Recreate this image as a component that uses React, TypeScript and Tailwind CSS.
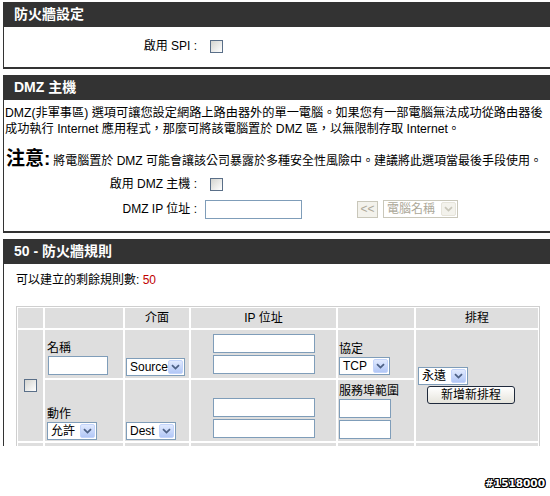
import clsx from "clsx";
import type { ReactNode } from "react";

function Chevron({ disabled }: { disabled?: boolean }) {
  return (
    <svg width="9" height="6" viewBox="0 0 9 6">
      <path
        d="M1 1.2 L4.5 4.6 L8 1.2"
        fill="none"
        stroke={disabled ? "#c9c7ba" : "#4d6185"}
        strokeWidth="1.8"
      />
    </svg>
  );
}

function Combo({ label, w, disabled }: { label: string; w: string; disabled?: boolean }) {
  return (
    <span
      className={clsx(
        "inline-flex h-[18px] items-center justify-between border bg-white pl-[3px] pr-px leading-none",
        w,
        disabled ? "border-[#c9c7ba] text-[#aca899]" : "border-[#7f9db9] text-black"
      )}
    >
      <span>{label}</span>
      <span
        className={clsx(
          "flex h-[14px] w-[15px] items-center justify-center rounded-[2px] border",
          disabled
            ? "border-[#e6e4da] bg-[#f3f2ec]"
            : "border-[#c3d4fb] bg-linear-to-b from-[#e1eafe] to-[#b2c7f6]"
        )}
      >
        <Chevron disabled={disabled} />
      </span>
    </span>
  );
}

function Field({ w }: { w: string }) {
  return <span className={clsx("block h-[19px] border border-[#7f9db9] bg-white", w)} />;
}

function Check() {
  return (
    <span className="block h-[13px] w-[13px] border border-[#5a6f88] bg-linear-to-br from-[#d4d4cf] to-white" />
  );
}

function Section({ title, children }: { title: string; children: ReactNode }) {
  return (
    <section className="mb-[6px] border-b-2 border-l border-[#333]">
      <h2 className="flex h-[25px] items-center bg-[#333] pl-[10px] text-[14px] font-bold text-white">
        {title}
      </h2>
      {children}
    </section>
  );
}

function LabelRow({ label, children }: { label: string; children: ReactNode }) {
  return (
    <div className="grid h-[20px] grid-cols-[195px_1fr] items-center">
      <span className="pr-[2px] text-right">{label}</span>
      <div className="flex items-center">{children}</div>
    </div>
  );
}

const cell = "bg-[#dedede]";

export default function App() {
  return (
    <div className="h-[496px] w-[550px] overflow-hidden bg-white font-['Liberation_Sans','Noto_Sans_CJK_TC',sans-serif] text-[12px] text-black">
      <div className="h-[446px] overflow-hidden pl-[3px] pt-[2px]">
        <div className="w-[560px]">
          {/* 防火牆設定 */}
          <Section title="防火牆設定">
            <div className="h-[40px] pt-[9px]">
              <LabelRow label="啟用 SPI :">
                <span className="ml-[11px]">
                  <Check />
                </span>
              </LabelRow>
            </div>
          </Section>

          {/* DMZ */}
          <Section title="DMZ 主機">
            <div className="pb-[12px] pt-[5px]">
              <p className="whitespace-nowrap pl-[1px] text-[12.2px] leading-[16px]">
                DMZ(非軍事區) 選項可讓您設定網路上路由器外的單一電腦。如果您有一部電腦無法成功從路由器後
                <br />
                成功執行 Internet 應用程式，那麼可將該電腦置於 DMZ 區，以無限制存取 Internet。
              </p>
              <p className="mt-[10px] flex items-baseline whitespace-nowrap pl-[2px] leading-[24px]">
                <strong className="mr-[3px] text-[19px] font-bold">注意:</strong>
                將電腦置於 DMZ 可能會讓該公司暴露於多種安全性風險中。建議將此選項當最後手段使用。
              </p>
              <div className="mt-[1px] flex flex-col gap-[5px]">
                <LabelRow label="啟用 DMZ 主機 :">
                  <span className="ml-[11px]">
                    <Check />
                  </span>
                </LabelRow>
                <LabelRow label="DMZ IP 位址 :">
                  <span className="ml-[6px]">
                    <Field w="w-[97px]" />
                  </span>
                  <span className="ml-[55px] flex h-[17px] w-[21px] items-center justify-center border border-[#c9c7ba] bg-[#f3f2ec] text-[12px] leading-none text-[#aca899]">
                    &lt;&lt;
                  </span>
                  <span className="ml-[5px]">
                    <Combo label="電腦名稱" w="w-[75px]" disabled />
                  </span>
                </LabelRow>
              </div>
            </div>
          </Section>

          {/* 防火牆規則 */}
          <Section title="50 - 防火牆規則">
            <div className="pt-[8px]">
              <p className="pl-[12px] leading-[16px]">
                可以建立的剩餘規則數: <span className="text-[#c00000]">50</span>
              </p>
              <div className="ml-[12px] mt-[18px] w-[524px] border border-[#cfcfcf] bg-white p-px">
                <div className="grid grid-cols-[25px_78px_64px_145px_76px_122px] grid-rows-[20px_48px_61px_40px] gap-[2px]">
                  <div className={cell} />
                  <div className={cell} />
                  <div className={clsx(cell, "flex items-center justify-center")}>介面</div>
                  <div className={clsx(cell, "flex items-center justify-center")}>IP 位址</div>
                  <div className={cell} />
                  <div className={clsx(cell, "flex items-center justify-center")}>排程</div>

                  <div className={clsx(cell, "row-span-2 flex items-center justify-center")}>
                    <Check />
                  </div>
                  <div className={clsx(cell, "flex flex-col justify-end pb-[3px] pl-[2px] leading-[15px]")}>
                    <span>名稱</span>
                    <span className="ml-px">
                      <Field w="w-[60px]" />
                    </span>
                  </div>
                  <div className={clsx(cell, "flex items-end pb-[2px] pl-px")}>
                    <Combo label="Source" w="w-[59px]" />
                  </div>
                  <div className={clsx(cell, "flex flex-col items-center justify-end gap-[2px] pb-[4px]")}>
                    <Field w="w-[102px]" />
                    <Field w="w-[102px]" />
                  </div>
                  <div className={clsx(cell, "flex flex-col items-start justify-end pb-[3px] pl-px leading-[15px]")}>
                    <span>協定</span>
                    <Combo label="TCP" w="w-[51px]" />
                  </div>
                  <div className={clsx(cell, "row-span-2 flex flex-col items-start justify-center")}>
                    <span className="ml-[2px]">
                      <Combo label="永遠" w="w-[50px]" />
                    </span>
                    <span className="ml-[11px] mt-[1px] flex h-[18px] w-[88px] items-center justify-center rounded-[3px] border border-[#1f2a3c] bg-linear-to-b from-white to-[#e6e4dc]">
                      新增新排程
                    </span>
                  </div>

                  <div className={clsx(cell, "flex flex-col justify-end pb-px pl-[2px] leading-[15px]")}>
                    <span>動作</span>
                    <Combo label="允許" w="w-[50px]" />
                  </div>
                  <div className={clsx(cell, "flex items-end pb-px pl-px")}>
                    <Combo label="Dest" w="w-[50px]" />
                  </div>
                  <div className={clsx(cell, "flex flex-col items-center justify-end gap-[2px] pb-[3px]")}>
                    <Field w="w-[102px]" />
                    <Field w="w-[102px]" />
                  </div>
                  <div className={clsx(cell, "flex flex-col items-start justify-end gap-[2px] pb-[2px] pl-px leading-[15px]")}>
                    <span className="-mb-[2px]">服務埠範圍</span>
                    <Field w="w-[52px]" />
                    <Field w="w-[52px]" />
                  </div>

                  <div className={cell} />
                  <div className={cell} />
                  <div className={cell} />
                  <div className={clsx(cell, "flex justify-center pt-[4px]")}>
                    <Field w="w-[102px]" />
                  </div>
                  <div className={cell} />
                  <div className={cell} />
                </div>
              </div>
            </div>
          </Section>
        </div>
      </div>
      <div className="flex h-[50px] items-end justify-end pb-[4px] pr-[5px]">
        <span className="font-['DejaVu_Sans',sans-serif] text-[10.5px] font-bold text-white [text-shadow:1px_0_#000,-1px_0_#000,0_1px_#000,0_-1px_#000,1px_1px_#000,-1px_-1px_#000,1px_-1px_#000,-1px_1px_#000]">
          #1518000
        </span>
      </div>
    </div>
  );
}
